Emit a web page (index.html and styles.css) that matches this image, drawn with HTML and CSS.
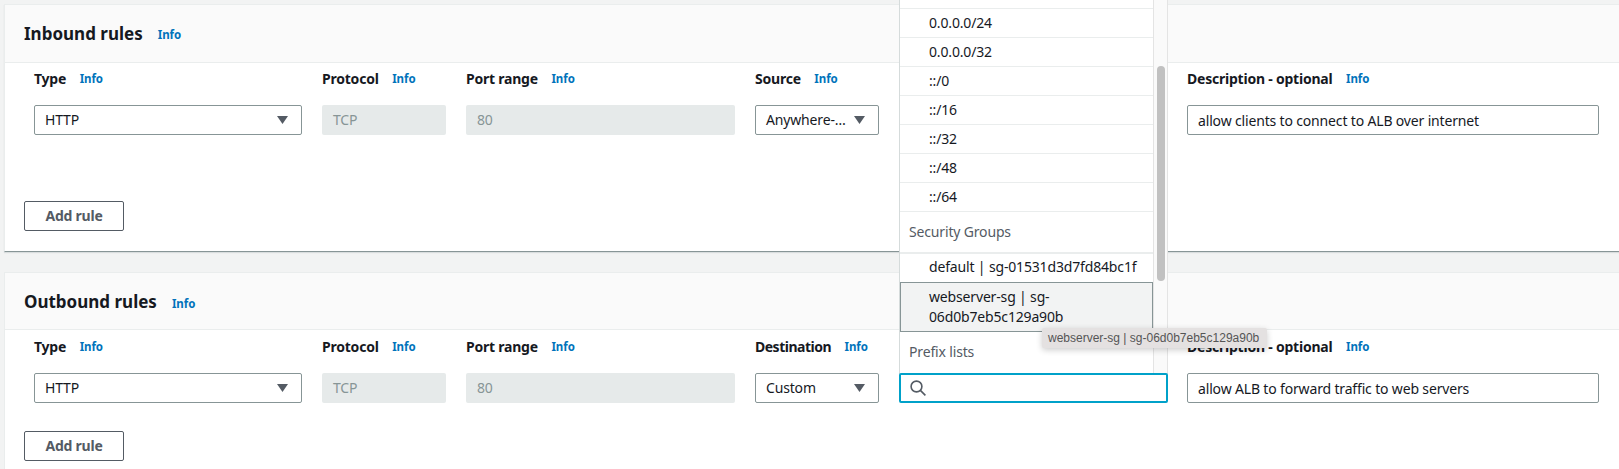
FILE: index.html
```html
<!DOCTYPE html>
<html lang="en">
<head>
<meta charset="utf-8">
<title>Security group rules</title>
<link rel="stylesheet" href="styles.css">
</head>
<body>
<div class="page">
  <section class="card card-in">
    <header class="card-head"><h2>Inbound rules</h2><a class="info info-title">Info</a></header>
    <div class="card-body">
      <div class="rule-grid rule-in">
        <div class="field"><div class="label"><span>Type</span><a class="info">Info</a></div><div class="select"><span>HTTP</span><svg class="caret" viewBox="0 0 11 8"><path d="M0 0h11L5.5 8z"/></svg></div></div>
        <div class="field"><div class="label"><span>Protocol</span><a class="info">Info</a></div><div class="disabled">TCP</div></div>
        <div class="field"><div class="label"><span>Port range</span><a class="info">Info</a></div><div class="disabled">80</div></div>
        <div class="field"><div class="label"><span>Source</span><a class="info">Info</a></div><div class="select"><span>Anywhere-…</span><svg class="caret" viewBox="0 0 11 8"><path d="M0 0h11L5.5 8z"/></svg></div></div>
        <div class="field"></div>
        <div class="field"><div class="label"><span>Description - optional</span><a class="info">Info</a></div><div class="text-input">allow clients to connect to ALB over internet</div></div>
      </div>
      <button class="add-btn">Add rule</button>
    </div>
  </section>

  <section class="card card-out">
    <header class="card-head"><h2>Outbound rules</h2><a class="info info-title">Info</a></header>
    <div class="card-body">
      <div class="rule-grid rule-out">
        <div class="field"><div class="label"><span>Type</span><a class="info">Info</a></div><div class="select"><span>HTTP</span><svg class="caret" viewBox="0 0 11 8"><path d="M0 0h11L5.5 8z"/></svg></div></div>
        <div class="field"><div class="label"><span>Protocol</span><a class="info">Info</a></div><div class="disabled">TCP</div></div>
        <div class="field"><div class="label"><span>Port range</span><a class="info">Info</a></div><div class="disabled">80</div></div>
        <div class="field"><div class="label"><span class="label-tight">Destination</span><a class="info">Info</a></div><div class="select"><span>Custom</span><svg class="caret" viewBox="0 0 11 8"><path d="M0 0h11L5.5 8z"/></svg></div></div>
        <div class="field field-search"><div class="label"></div><div class="search"><svg class="search-icon" viewBox="0 0 16 16"><circle cx="6.5" cy="6.5" r="5.4"/><path d="M10.4 10.4L15.4 15.4"/></svg></div></div>
        <div class="field"><div class="label"><span>Description - optional</span><a class="info">Info</a></div><div class="text-input">allow ALB to forward traffic to web servers</div></div>
      </div>
      <button class="add-btn">Add rule</button>
    </div>
  </section>

  <div class="dropdown">
    <div class="list">
      <div class="opt">0.0.0.0/16</div>
      <div class="opt">0.0.0.0/24</div>
      <div class="opt">0.0.0.0/32</div>
      <div class="opt">::/0</div>
      <div class="opt">::/16</div>
      <div class="opt">::/32</div>
      <div class="opt">::/48</div>
      <div class="opt">::/64</div>
      <div class="group">Security Groups</div>
      <div class="opt opt-first">default | sg-01531d3d7fd84bc1f</div>
      <div class="opt opt-hover">webserver-sg | sg-<br>06d0b7eb5c129a90b</div>
      <div class="group group-last">Prefix lists</div>
    </div>
    <div class="track"><div class="thumb"></div></div>
  </div>
  <div class="tooltip">webserver-sg | sg-06d0b7eb5c129a90b</div>
</div>
</body>
</html>
```
FILE: styles.css
```css
* { box-sizing: border-box; }
html, body { margin: 0; height: 100%; }
body {
  background: #f2f3f3;
  color: #16191f;
  font-family: "Noto Sans", "Open Sans", Arial, sans-serif;
  font-size: 14px;
  line-height: 20px;
  letter-spacing: -0.16px;
  overflow: hidden;
}
.page { position: relative; width: 1619px; height: 469px; padding: 4px 0 0 4px; }

.card { background: #fff; border-left: 1px solid #eaeded; }
.card-in { height: 248px; border-bottom: 1px solid #879596; box-shadow: 0 1px 1px rgba(0,28,36,.1); }
.card-out { margin-top: 20px; height: 200px; }
.card-head {
  display: flex;
  align-items: center;
  height: 59px;
  padding: 0 0 0 19px;
  background: #fafafa;
  border-top: 1px solid #eaeded;
  border-bottom: 1px solid #eaeded;
}
.card-out .card-head { height: 58px; padding-top: 2px; }
.card-head h2 { margin: 0; font-size: 17px; line-height: 22px; font-weight: 700; letter-spacing: 0; }
.info { color: #0073bb; font-size: 11.5px; font-weight: 700; line-height: 16px; margin-left: 13.5px; letter-spacing: -0.05px; }
.info-title { margin-left: 15px; margin-top: 3px; }

.card-body { padding: 0 0 0 19px; }
.rule-grid {
  display: grid;
  grid-template-columns: 268px 124px 269px 124px 268px 412px;
  column-gap: 20px;
  margin-left: 10px;
}
.rule-in { margin-bottom: 66px; }
.rule-out { margin-bottom: 28px; }
.label { display: flex; align-items: center; height: 20px; margin: 6px 0 16px; font-weight: 700; letter-spacing: -0.22px; }
.card-out .label { margin: 7px 0 16px; }
.label-tight { letter-spacing: -0.5px; }
.select, .text-input, .disabled, .search { height: 30px; border-radius: 2px; }
.select {
  display: flex;
  align-items: center;
  justify-content: space-between;
  padding: 0 13px 0 10px;
  background: #fff;
  border: 1px solid #879596;
}
.caret { width: 11px; height: 8px; fill: #545b64; flex: none; }
.disabled { display: flex; align-items: center; padding: 0 11px; background: #e6eaea; color: #879596; }
.text-input { display: flex; align-items: center; padding: 1px 10px 0; background: #fff; border: 1px solid #879596; }
.search {
  position: relative;
  z-index: 3;
  display: flex;
  align-items: center;
  margin-right: -1px;
  padding-left: 9px;
  background: #fff;
  border: 2px solid #00a1c9;
}
.search-icon { width: 16px; height: 16px; fill: none; stroke: #545b64; stroke-width: 1.6; }

.add-btn {
  display: block;
  width: 100px;
  height: 30px;
  padding: 0;
  background: #fff;
  border: 1px solid #545b64;
  border-radius: 2px;
  color: #545b64;
  font: 700 14px/20px "Noto Sans", "Open Sans", Arial, sans-serif;
  letter-spacing: -0.22px;
}

.dropdown {
  position: absolute;
  left: 899px;
  top: 0;
  width: 269px;
  height: 374px;
  display: flex;
  overflow: hidden;
  background: #fff;
  border-left: 1px solid #d5dbdb;
  z-index: 2;
}
.list { flex: 1; margin-top: -20px; }
.opt { padding: 4px 10px 4px 29px; min-height: 29px; border-bottom: 1px solid #eaeded; }
.opt-first { padding-top: 3px; padding-bottom: 5px; }
.opt-hover { background: #f2f3f3; border: 1px solid #879596; margin-top: -1px; padding: 4px 10px 5px 28px; height: 50px; }
.group { height: 42px; padding: 10px 0 0 9px; color: #545b64; border-bottom: 2px solid #eaeded; }
.group-last { border-bottom: 0; height: 41px; padding-top: 10px; }
.track { flex: none; width: 15px; background: #fafafa; border-left: 1px solid #e4e4e4; border-right: 1px solid #e4e4e4; padding: 66px 2px 0 3px; }
.thumb { width: 8px; height: 215px; background: #c1c1c1; border-radius: 4px; }

.tooltip {
  position: absolute;
  left: 1042px;
  top: 328px;
  width: 225px;
  height: 20px;
  padding-left: 6px;
  background: #e4e1e1;
  border-radius: 2px;
  color: #555;
  font: 12px/20px "Liberation Sans", Arial, sans-serif;
  letter-spacing: 0;
  box-shadow: 0 2px 6px rgba(0,0,0,.2);
  z-index: 4;
}
```
